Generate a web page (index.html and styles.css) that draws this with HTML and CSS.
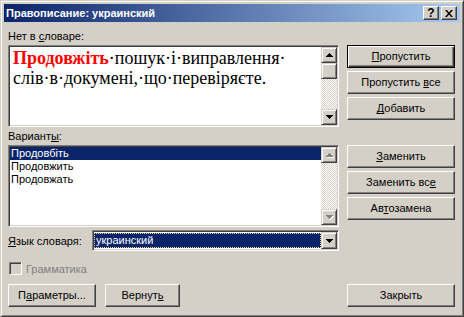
FILE: index.html
```html
<!DOCTYPE html>
<html>
<head>
	<title>Правописание: украинский</title>
	<meta charset="utf-8">
	<link rel="stylesheet" href="styles.css">
</head>
<body>
	<div class="window">
		<div class="titlebar">
			<span class="title">Правописание: украинский</span>
			<div class="title-buttons">
				<span class="tbtn">?</span>
				<span class="tbtn">
					<svg width="8" height="7" viewBox="0 0 8 7"><path d="M0 0h2l2 2.4 2-2.4h2l-3 3.5 3 3.5h-2l-2-2.4-2 2.4h-2l3-3.5z"/></svg>
				</span>
			</div>
		</div>
		<div class="content">
			<div class="section">
				<div class="left">
					<div class="label">Нет в <u>с</u>ловаре:</div>
					<div class="field textbox">
						<div class="doc"><span class="err">Продовжіть</span>·пошук·і·виправлення·<br>слів·в·докумені,·що·перевіряєте.</div>
						<div class="scrollbar">
							<span class="sbtn"><svg width="7" height="4" viewBox="0 0 7 4"><path d="M3 0h1v1H3zM2 1h3v1H2zM1 2h5v1H1zM0 3h7v1H0z"/></svg></span>
							<span class="sbtn"></span>
							<span class="track"></span>
							<span class="sbtn"><svg width="7" height="4" viewBox="0 0 7 4"><path d="M0 0h7v1H0zM1 1h5v1H1zM2 2h3v1H2zM3 3h1v1H3z"/></svg></span>
						</div>
					</div>
				</div>
				<div class="side">
					<span class="btn default"><u>П</u>ропустить</span>
					<span class="btn">Пропустить <u>в</u>се</span>
					<span class="btn"><u>Д</u>обавить</span>
				</div>
			</div>

			<div class="section second">
				<div class="left">
					<div class="label">Вариант<u>ы</u>:</div>
					<div class="field listbox">
						<div class="items">
							<div class="item sel">Продовбіть</div>
							<div class="item">Продовжить</div>
							<div class="item">Продовжать</div>
						</div>
						<div class="scrollbar">
							<span class="sbtn off"><svg width="7" height="4" viewBox="0 0 7 4"><path d="M3 0h1v1H3zM2 1h3v1H2zM1 2h5v1H1zM0 3h7v1H0z"/></svg></span>
							<span class="track"></span>
							<span class="sbtn off"><svg width="7" height="4" viewBox="0 0 7 4"><path d="M0 0h7v1H0zM1 1h5v1H1zM2 2h3v1H2zM3 3h1v1H3z"/></svg></span>
						</div>
					</div>
					<div class="lang">
						<span class="lang-label"><u>Я</u>зык словаря:</span>
						<div class="field combo">
							<span class="combo-value">украинский</span>
							<span class="sbtn drop"><svg width="7" height="4" viewBox="0 0 7 4"><path d="M0 0h7v1H0zM1 1h5v1H1zM2 2h3v1H2zM3 3h1v1H3z"/></svg></span>
						</div>
					</div>
				</div>
				<div class="side">
					<span class="btn"><u>З</u>аменить</span>
					<span class="btn">Заменить вс<u>е</u></span>
					<span class="btn">Ав<u>т</u>озамена</span>
				</div>
			</div>

			<div class="check-row">
				<span class="checkbox"></span>
				<span class="disabled">Грамматика</span>
			</div>

			<div class="bottom">
				<span class="btn params">П<u>а</u>раметры...</span>
				<span class="btn undo">Вернут<u>ь</u></span>
				<span class="btn close">Закрыть</span>
			</div>
		</div>
	</div>
</body>
</html>
```

FILE: styles.css
```css
* {
	box-sizing: border-box;
}

body {
	margin: 0;
	font: 11px "Liberation Sans", Arial, sans-serif;
	color: #000;
}

u {
	text-decoration-skip-ink: none;
}

.window {
	width: 464px;
	height: 317px;
	background: #d4d0c8;
	border: 1px solid;
	border-color: #d4d0c8 #404040 #404040 #d4d0c8;
	box-shadow: inset 1px 1px #fff, inset -1px -1px #808080;
	padding: 3px;
}

.titlebar {
	height: 18px;
	display: flex;
	align-items: center;
	justify-content: space-between;
	padding: 0 3px 0 2px;
	background: linear-gradient(to right, #0a246a, #a6caf0);
	color: #fff;
	font-weight: bold;
}

.title-buttons {
	display: flex;
	gap: 2px;
}

.tbtn {
	width: 16px;
	height: 14px;
	display: flex;
	align-items: center;
	justify-content: center;
	background: #d4d0c8;
	color: #000;
	border: 1px solid;
	border-color: #fff #404040 #404040 #fff;
	box-shadow: inset -1px -1px #808080;
	font-size: 12px;
}

.content {
	padding: 8px 5px 0 4px;
}

.section {
	display: flex;
	gap: 8px;
}

.second {
	margin-top: 3px;
}

.left {
	width: 331px;
	display: flex;
	flex-direction: column;
}

.label {
	height: 13px;
	line-height: 13px;
	margin-bottom: 2px;
}

.field {
	border: 1px solid;
	border-color: #808080 #fff #fff #808080;
	box-shadow: inset 1px 1px #404040, inset -1px -1px #d4d0c8;
	padding: 1px;
	background: #fff;
}

.textbox {
	height: 82px;
	display: flex;
}

.doc {
	flex: 1;
	padding: 1px 3px;
	font: 18px/20px "Liberation Serif", "Times New Roman", serif;
}

.err {
	color: #f00;
	font-weight: bold;
}

.scrollbar {
	width: 16px;
	display: flex;
	flex-direction: column;
}

.sbtn {
	width: 16px;
	height: 16px;
	flex: none;
	display: flex;
	align-items: center;
	justify-content: center;
	background: #d4d0c8;
	border: 1px solid;
	border-color: #d4d0c8 #404040 #404040 #d4d0c8;
	box-shadow: inset 1px 1px #fff, inset -1px -1px #808080;
}

.sbtn.off svg {
	fill: #808080;
	filter: drop-shadow(1px 1px 0 #fff);
}

.track {
	flex: 1;
	background: repeating-conic-gradient(#fff 0 25%, #d4d0c8 0 50%) 0 0 / 2px 2px;
}

.side {
	width: 108px;
	padding-top: 15px;
	display: flex;
	flex-direction: column;
	gap: 3px;
}

.btn {
	display: block;
	height: 23px;
	line-height: 21px;
	text-align: center;
	white-space: nowrap;
	background: #d4d0c8;
	border: 1px solid;
	border-color: #fff #404040 #404040 #fff;
	box-shadow: inset -1px -1px #808080;
}

.btn.default {
	border-color: #000;
	box-shadow: inset 1px 1px #fff, inset -1px -1px #404040, inset -2px -2px #808080;
}

.listbox {
	height: 82px;
	display: flex;
}

.items {
	flex: 1;
}

.item {
	height: 13px;
	line-height: 13px;
	padding-left: 1px;
}

.item.sel {
	background: #0a246a;
	color: #fff;
}

.lang {
	margin-top: 3px;
	height: 21px;
	display: flex;
	align-items: center;
}

.lang-label {
	width: 84px;
}

.combo {
	flex: 1;
	height: 21px;
	display: flex;
	padding: 1px 1px 1px 0;
}

.combo-value {
	flex: 1;
	margin: 1px 0 1px 1px;
	padding-left: 1px;
	line-height: 13px;
	background: #0a246a;
	color: #fff;
	border: 1px dotted #e8d890;
}

.drop {
	height: 17px;
}

.check-row {
	margin-top: 11px;
	height: 13px;
	display: flex;
	align-items: center;
	gap: 4px;
	padding-left: 1px;
}

.checkbox {
	width: 13px;
	height: 13px;
	border: 1px solid;
	border-color: #808080 #fff #fff #808080;
	box-shadow: inset 1px 1px #404040, inset -1px -1px #d4d0c8;
	background: #d4d0c8;
}

.disabled {
	color: #808080;
}

.bottom {
	margin-top: 9px;
	display: flex;
	gap: 9px;
}

.params {
	width: 88px;
}

.undo {
	width: 75px;
}

.close {
	width: 108px;
	margin-left: auto;
}
```
